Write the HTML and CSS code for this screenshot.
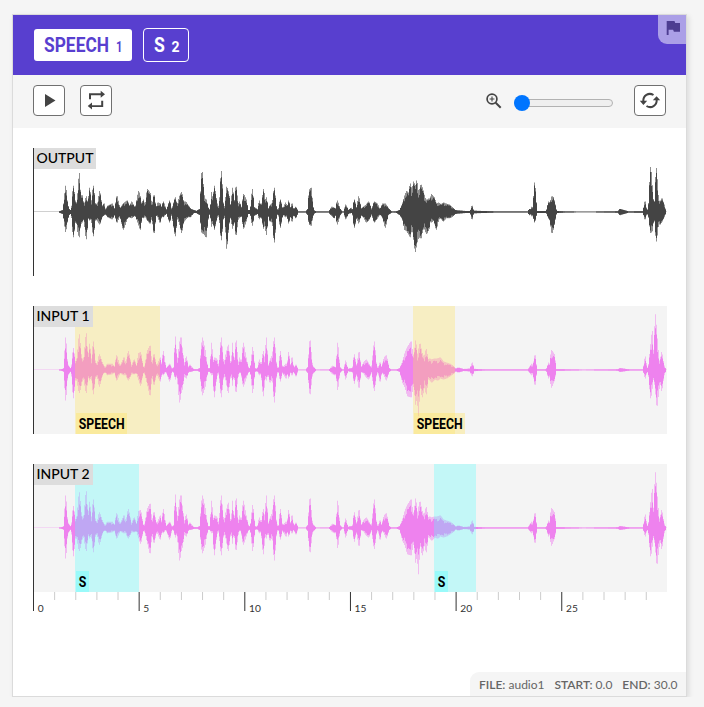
FILE: index.html
```html
<!DOCTYPE html>
<html lang="en">
<head>
<meta charset="utf-8">
<title>Audio annotation</title>
<link rel="stylesheet" href="styles.css">
</head>
<body>
<main class="card">
  <header class="labels">
    <button class="label active"><svg width="82" height="24"><text class="name" transform="translate(0 19) scale(.87 1)" textLength="74.7" lengthAdjust="spacingAndGlyphs">SPEECH</text><text class="key" transform="translate(72 19) scale(.8 1)">1</text></svg></button>
    <button class="label"><svg width="28" height="24"><text class="name" transform="translate(0 19) scale(.88 1)">S</text><text class="key" x="17.5" y="19">2</text></svg></button>
    <div class="flag"><svg width="28" height="29" viewBox="0 0 28 29"><path d="M8.7 6h7.8l.7 2H22v8.7h-6.1l-.8-2h-4.5V20H8.7z"/></svg></div>
  </header>
  <div class="toolbar">
    <button class="tool"><svg width="30" height="29" viewBox="0 0 30 29"><path d="M11 8v13l10.5-6.5z"/></svg></button>
    <button class="tool"><svg width="30" height="29" viewBox="0 0 30 29"><path d="M8 13.3V7.3h11.7V4.8L24 8.3l-4.3 3.5V9.2H10v4.1zM22.2 14.8v6.3H11v2.5l-4.3-3.5 4.3-3.5v2.6h9.2v-4.4z"/></svg></button>
    <svg class="zoom-icon" width="18" height="18" viewBox="0 0 18 18"><circle cx="7" cy="7" r="4.9"/><path d="M10.7 10.7l5 5"/><path class="plus" d="M7 4.6v4.8M4.6 7h4.8"/></svg>
    <div class="slider"><i class="track"></i><i class="thumb"></i></div>
    <button class="tool"><svg class="sync" width="30" height="29" viewBox="0 0 30 29"><path class="arc" d="M8.3 15.2C8 9.8 13.5 6 18.5 9M21.7 13.8c.3 5.5-5.2 9.2-10.2 6.2"/><path d="M4.8 14.8h7.4l-3.8 4.1zM17.8 14.3h7.4l-3.6-4z"/></svg></button>
  </div>
  <section class="tracks">
    <div class="track-row output"><svg class="wave" width="633" height="128"></svg><span class="title">OUTPUT</span></div>
    <div class="track-row input"><svg class="wave" width="633" height="128"></svg>
      <div class="region speech first"><svg class="tag" width="51" height="21"><text transform="translate(2.7 16) scale(.88 1)" textLength="52.2" lengthAdjust="spacingAndGlyphs">SPEECH</text></svg></div>
      <div class="region speech second"><svg class="tag" width="51" height="21"><text transform="translate(2.7 16) scale(.88 1)" textLength="52.2" lengthAdjust="spacingAndGlyphs">SPEECH</text></svg></div>
      <span class="title">INPUT 1</span></div>
    <div class="track-row input"><svg class="wave" width="633" height="128"></svg>
      <div class="region sound third"><svg class="tag" width="13" height="21"><text transform="translate(2.7 16) scale(.88 1)">S</text></svg></div>
      <div class="region sound fourth"><svg class="tag" width="13" height="21"><text transform="translate(2.7 16) scale(.88 1)">S</text></svg></div>
      <span class="title">INPUT 2</span></div>
    <svg class="timeline" width="634" height="24"></svg>
  </section>
  <footer class="info"><span><b>FILE:</b> audio1</span><span><b>START:</b> 0.0</span><span><b>END:</b> 30.0</span></footer>
</main>
<script src="waves.js"></script>
</body>
</html>
```
FILE: styles.css
```css
* { box-sizing: border-box; }
body { margin: 0; padding: 14px 0 0 12px; background: #f5f5f5; font-family: Lato, sans-serif; }
.card { width: 675px; height: 683px; border: 1px solid #dbdbdb; background: #fff; box-shadow: 2px 2px 5px rgba(0,0,0,.1); display: flex; flex-direction: column; position: relative; }
.labels { height: 60px; flex: none; background: #583fcf; display: flex; align-items: center; gap: 11px; padding-left: 21px; position: relative; }
button { padding: 0; margin: 0; font: inherit; }
.label { height: 34px; width: 46px; padding: 0 0 0 10px; border: 1px solid #fff; border-radius: 4px; background: transparent; display: flex; align-items: center; color: #fff; }
.label.active { height: 32px; width: 98px; border: 0; border-radius: 3px; background: #fff; color: #583fcf; }
.label svg { display: block; flex: none; fill: currentColor; font-family: Roboto, sans-serif; font-weight: 700; }
.name { font-size: 20px; }
.key { font-size: 14px; }
.flag { position: absolute; right: 0; top: 0; width: 28px; height: 29px; background: #ab9fe7; border-bottom-left-radius: 9px; }
.flag svg { display: block; fill: #4d3d91; }
.toolbar { height: 53px; flex: none; background: #f5f5f5; display: flex; align-items: flex-start; padding: 10px 20px 0; }
.tool { width: 32px; height: 31px; border: 1px solid #707070; border-radius: 4px; background: #fff; margin-right: 15px; }
.tool:last-child { margin: 0; }
.tool svg { display: block; fill: #444; }
.arc { fill: none; stroke: #444; stroke-width: 2; }
.zoom-icon { margin: 7px 10px 0 auto; fill: none; stroke: #444; stroke-width: 1.7; }
.zoom-icon path:nth-child(2) { stroke-width: 2; }
.zoom-icon .plus { stroke-width: 1.1; }
.slider { width: 99px; height: 16px; margin: 10px 21px 0 1px; display: flex; align-items: center; }
.track { width: 99px; height: 8px; flex: none; border: 1px solid #b2b2b2; border-radius: 4px; background: #efefef; }
.thumb { width: 16px; height: 16px; flex: none; margin-left: -99px; border-radius: 50%; background: #0075ff; }
.tracks { padding: 20px 0 0 20px; display: flex; flex-direction: column; }
.track-row { position: relative; width: 634px; height: 128px; margin-bottom: 30px; border-left: 1px solid #333; color: #444; }
.track-row:nth-child(3) { margin-bottom: 0; }
.input { background: #f4f4f4; color: violet; }
.wave { display: block; fill: currentColor; }
.title { position: absolute; left: 0; top: 0; height: 21px; padding: 0 3px 0 2.5px; line-height: 20px; font-size: 14px; font-weight: 500; color: #000; background: #ddd; white-space: nowrap; }
.region { position: absolute; top: 0; height: 128px; }
.speech { background: rgba(254,224,84,.3); }
.sound { background: rgba(84,254,255,.3); }
.sound .tag { background: rgba(84,254,255,.36); }
.speech .tag { background: rgba(255,226,84,.34); }
.first { left: 41px; width: 85px; }
.second { left: 379px; width: 42px; }
.third { left: 41px; width: 64px; }
.fourth { left: 400px; width: 42px; }
.tag { position: absolute; left: 1px; bottom: 0; font: 700 14px Roboto, sans-serif; fill: #000; }
.timeline { display: block; font-size: 10.2px; fill: #333; }
.info { position: absolute; right: 0; bottom: 0; width: 216px; height: 24px; padding-left: 9px; display: flex; gap: 10px; align-items: center; background: #f5f5f5; border-top-left-radius: 9px; font-size: 12px; color: #666; white-space: nowrap; }
.info b { font-weight: 600; }
```
FILE: waves.js
```js
// Each run: [start x, "x,up,down ..."], x in thirds of a pixel; down defaults to up.
const outputRuns = [
  [-14, "118,.5 130,2 137,25,19 142,8 148,2 155,2 160,25,24 168,3 173,14,18 178,37,24 181,15,12 186,16,10 192,5,6 199,15,26 204,5 209,23,8 214,5 220,25,23 226,6 234,9 239,20,12 246,5 252,8,3 256,2 264,6,5 277,8,7 284,2 291,15,10 300,3 310,8,17 322,11,6 329,5 335,10,6 346,3 356,20,12 361,14,17 365,5 370,12,6 376,4 382,22,8 390,18,11 396,4 402,16,20 408,3 414,9,5 420,8,10 425,4 430,10,5 440,1 449,11,10 455,1 466,14,23 471,5 479,15,11 485,19,20 490,10 497,10,7 503,7,5 512,3,5 520,2,1 530,1 540,3 546,38,20 553,13,21 558,12,24 566,2 572,3 575,19,14 579,5 583,25,17 590,9,6 598,3 604,39,27 610,4 616,6 620,24,35 626,18,13 632,3 638,23,16 643,4 648,24,22 656,3"],
  [196, "2,3 7,22,12 12,4 17,23,19 22,2 28,10,6 35,3 41,17,16 48,12,9 54,2 62,2 67,22,13 73,2 77,4,3 83,1 88,11,7 94,3 101,22,16 105,8 109,14,22 115,2 120,6,9 128,9,10 133,23,29 139,3 146,2 151,12,15 158,2 167,9,5 172,3 176,11,11 181,3 186,8,9 191,1 197,5,6 204,.5 228,.5 234,3 238,21,12 243,23,13 250,2 258,.4 297,.5 306,5,4 313,4,6 317,2 322,11,12 330,3 335,.5 342,.5 347,7,7 355,1.5 364,4,1 368,1 373,12,15 380,2,4 386,15,11 393,3 401,5,5 409,7,10 416,10,8 425,2 433,10,10 442,8,6 450,2 458,8,5 466,8,15 474,4,3 484,.5 500,.7 510,2,3 518,8,7 524,15,17 530,20,18 536,17,21 541,27,24 546,19,13 551,29,24 556,22,38 560,30,30 566,17,24 573,26,25 578,22,17 584,14,16 590,11,21 597,13,16 600,9 604,17,10 612,14,8 619,8,17 626,9,7 633,7,6 640,9,9 648,8,6 658,7,6"],
  [416, "5,5 15,2 24,1.5 55,.9 62,1 66,6,7 70,1.3 100,1 150,.4 235,.5 238,3 241,1 245,5,4 250,4 254,28,10 260,1 290,1 296,10,6 300,8 306,15,20 310,14,16 316,6 319,1 350,.5 400,.2 430,.2 455,.6 505,.7 510,3 520,2 535,.6 580,.8 585,10,7 590,1 596,3 602,43,20 607,22,18 611,4,5 614,4,5 619,42,28 625,12 630,9,12 636,13,9 642,7,5 648,0"]
];
const inputRuns = [
  [-14, "118,.4 128,1 132,2 137,31,29 142,6 150,2 155,2 160,21,27 167,4 172,13,12 178,34,22 183,15 190,6 199,35,22 204,5 209,25,10 214,4 220,27,23 226,6 233,7 238,15,16 248,6,4 256,2 262,6,5 277,6,4 284,2 290,14,10 300,3 312,12,5 318,5 325,18,10 334,4 343,10,4 350,3 356,16,9 362,17,15 369,3 375,4 382,18,13 390,23,24 396,4 402,15,14 410,3 421,12,11 425,3 430,18,5 438,1 449,6,11 456,1 463,3 466,32,9 471,4 479,26,31 483,31,22 487,19,18 493,5 499,13,8 505,2 510,5,2 520,1 532,.7 540,2 547,31,24 555,19,16 563,2 571,2 575,26,5 579,4 583,12,26 590,11,6 597,3 604,31,26 611,3 618,15,10 625,24,22 632,3 638,20,10 643,3 648,27,21 656,2"],
  [196, "3,2 7,26,15 12,3 19,28,21 24,3 29,12,3 34,3 40,26,16 48,12,8 55,2 62,2 68,22,22 74,2 83,1 88,10,5 94,3 100,18,25 105,6 109,31,10 114,2 120,9,12 128,15,8 133,31,31 139,4 147,2 151,18,11 157,2 168,6,8 172,2 176,17,8 181,2 186,12,5 191,1 198,5,6 204,.3 228,.3 234,3 240,28,23 247,4 258,.3 298,.4 308,4,4 315,3,5 319,3 323,26,19 329,3 336,.4 342,.5 347,9 353,1 364,2 368,1 373,15,13 379,2 387,17,17 393,2 401,7,3 409,10,7 416,6,9 425,1.5 433,27,20 439,4 445,2 450,7,11 455,2 463,12,5 469,14,10 477,2 484,.4 500,.5 510,2 518,8,12 526,17,17 533,22,25 543,27,26 548,16,18 552,12 557,28,33 562,12,18 565,18,44 570,25,12 577,15,26 583,12,15 589,20,23 594,9 598,11,9 605,10,12 615,11,9 623,11,10 631,12,8 640,8,9 650,7,8"],
  [416, "0,6 5,5 12,3 17,1 25,2.5 40,1 60,1.5 67,7,6 72,1.2 105,.6 235,.6 245,6,5 249,3 255,14,14 260,.6 290,.8 296,7,8 300,4 304,19,17 313,15,10 318,1 400,.3 455,.5 505,.8 510,2 530,1 540,.6 580,.6 586,13,8 590,1 596,3 602,22,27 607,37,16 611,4 616,53,17 621,30,34 627,9,18 630,7 635,17,20 641,5,6 648,0"]
];
function points(runs) {
  return runs.flatMap(([start, text]) => text.split(" ").map(item => {
    const [x, up, down = up] = item.split(",").map(Number);
    return [start + x / 3, up, down];
  }));
}
function levelAt(pts, x) {
  const k = pts.findIndex(p => p[0] > x);
  if (k < 1) return [0, 0];
  const a = pts[k - 1], b = pts[k], t = (x - a[0]) / (b[0] - a[0]);
  return [a[1] + (b[1] - a[1]) * t, a[2] + (b[2] - a[2]) * t];
}
// One bar per pixel column, as tall as the loudest sample in that column.
function bars(pts, scale, dips) {
  let d = "";
  for (let x = 8; x < 632; x++) {
    const near = [.05, .35, .65, .95].map(o => levelAt(pts, x + o));
    pts.forEach(p => { if (p[0] >= x && p[0] < x + 1) near.push([p[1], p[2]]); });
    const dip = dips[(x * 7 + (x >> 2) * 3) % dips.length];
    const up = Math.max(...near.map(v => v[0])), down = Math.max(...near.map(v => v[1]));
    const ease = v => (v > 3 ? v * dip : v) * scale;
    if (up + down > .1) d += `M${x} ${(64 - ease(up)).toFixed(1)}h1V${(64 + ease(down)).toFixed(1)}h-1z`;
  }
  return d;
}
document.querySelectorAll(".wave").forEach((svg, i) => {
  const pts = points(i ? inputRuns : outputRuns);
  svg.innerHTML = `<path opacity=".25" d="M0 63h633v1H0z"/><path opacity="${i ? .5 : .6}" d="${bars(pts, 1.05, [1])}"/><path d="${bars(pts, i ? .84 : .95, [1, .72, .94, .82, .98])}"/>`;
});
let ticks = "";
for (let s = 0; s < 30; s++) {
  const x = s * 21.13, major = s % 5 === 0;
  ticks += `<rect x="${x.toFixed(2)}" width="1" height="${major ? 19 : 8}" fill="${major ? "#333" : "#ccc"}"/>`;
  if (major) ticks += `<text x="${(x + 4.7).toFixed(1)}" y="19.5">${s}</text>`;
}
document.querySelector(".timeline").innerHTML = ticks;
```
